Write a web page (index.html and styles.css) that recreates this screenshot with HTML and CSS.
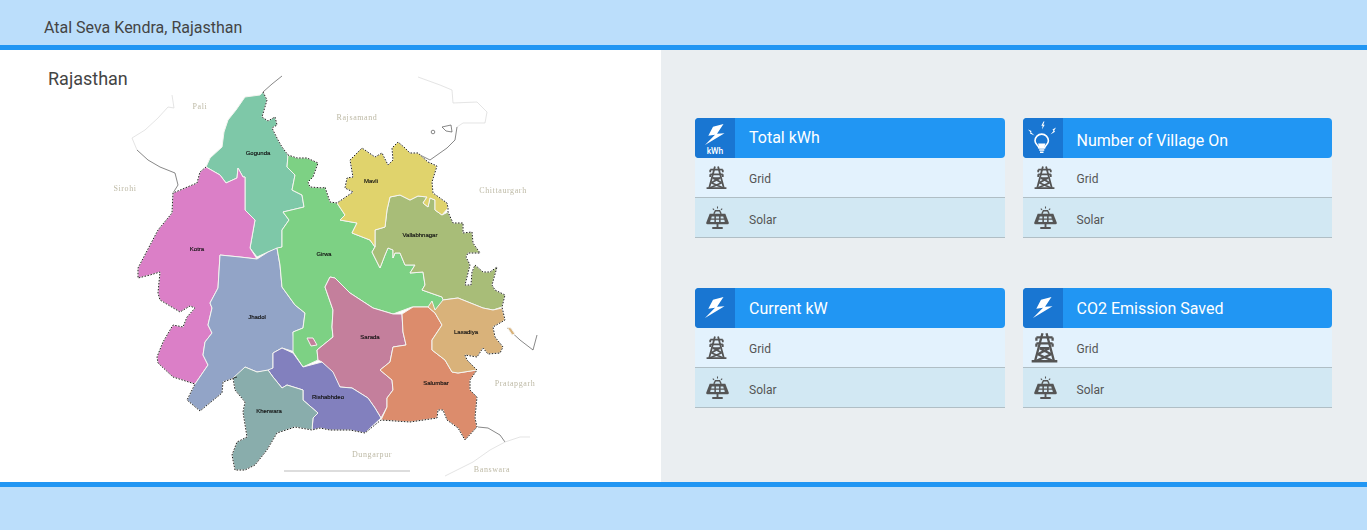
FILE: index.html
```html
<!doctype html>
<html>
<head>
    <meta charset="utf-8">
    <title>Atal Seva Kendra, Rajasthan</title>
    <link rel="stylesheet" href="styles.css">
</head>

<body>

<svg class="defs" width="0" height="0">
    <symbol id="i-bolt" viewBox="0 0 20 22">
        <path d="M18.500 0 L8 2.700 L3.300 11.800 L10 10.800 L0 21 L19.500 9.300 L12 9.800 Z" fill="#fff"/>
    </symbol>
    <symbol id="i-bulb" viewBox="0 0 40 40">
        <g fill="none" stroke="#fff">
            <path d="M16 30 C15.500 27 12 26.500 12 22.800 A6.700 6.700 0 0 1 25.400 22.800 C25.400 26.500 22 27 21.500 30 Z" stroke-width="1.600"/>
            <path d="M16.200 32 H21.300 M17 34.200 H20.500" stroke-width="1.500"/>
        </g>
        <path d="M15 25.500 H22.500 L21 30 H16.500 Z" fill="#fff"/>
        <path d="M20.500 3.500 L18.300 7.800 L19.700 7.800 L19 11.500 L21.700 6.800 L20.200 6.800 L21.500 3.500 Z" fill="#fff"/>
        <path d="M5 11.500 L8.500 13 L8 14.200 L11.500 17.500 L7 15.500 L7.500 14.300 Z" fill="#fff"/>
        <path d="M33 9.500 L29.500 11.500 L30.500 13 L27.500 16.500 L32 13.800 L31.200 12.500 Z" fill="#fff"/>
    </symbol>
    <symbol id="i-tower" viewBox="0 0 20 22">
        <g fill="none" stroke="#555" stroke-width="1.700">
            <path d="M8.500 .5 L3 21 M11.500 .5 L17 21 M.5 21.200 H19.500"/>
            <path d="M4 3.500 H16 M4 3.500 V6 M16 3.500 V6 M4 8 H16 M4 8 V10.500 M16 8 V10.500 M6.500 11.500 H13.500"/>
            <path d="M6.500 11.500 L15 16 M13.500 11.500 L5 16 M5 16 L16.500 21 M15 16 L3.500 21"/>
        </g>
    </symbol>
    <symbol id="i-solar" viewBox="0 0 22 22">
        <g fill="none" stroke="#555">
            <path d="M7.500 7.500 L9 4.500 H13 L14.500 7.500" stroke-width="1.300"/>
            <path d="M11 .5 V2.500 M6.500 2.500 L7.700 3.700 M15.500 2.500 L14.300 3.700" stroke-width="1"/>
            <path d="M11 17 V20 M6 21 H16" stroke-width="1.800"/>
        </g>
        <path d="M3.500 7.500 H18.500 L21.800 16 Q22 17.500 20.500 17.500 H1.500 Q0 17.500 .2 16 Z" fill="#555"/>
        <path d="M5.500 10 H8 V12 H5 Z M9.500 10 H12.500 V12 H9.500 Z M14 10 H16.500 L17 12 H14 Z M4.500 13.200 H8 V15.200 H4 Z M9.500 13.200 H12.500 V15.200 H9.500 Z M14 13.200 H17.500 L18 15.200 H14 Z" fill="#d2e8f3"/>
    </symbol>
</svg>

<div class="top-bar">Atal Seva Kendra, Rajasthan</div>

<div class="main">
    <div class="map-panel">
        <h2 class="map-title">Rajasthan</h2>
        <svg class="map" viewBox="0 50 661 432" width="661" height="432">
            <g class="outer-line">
                <polyline class="faint" points="172,95 174,108 168,107 158,118 145,130 132,138 137,150"/>
                <polyline points="137,150 148,160 160,167 175,173 178,185 173,193"/>
                <polyline points="282,76 272,84 263,92"/>
                <polyline class="faint" points="418,77 440,85 452,90 453,103 477,102 487,112 485,123 463,123 457,127"/>
                <polyline points="457,127 455,140 447,148 430,160 420,155"/>
                <circle cx="433" cy="132" r="1.800"/>
                <polygon points="442,127 451,125 452,132 446,131"/>
                <polyline points="478,427 488,428 500,435 505,442"/>
                <polyline class="faint" points="505,442 490,450 473,462 445,476"/>
                <polyline class="faint" points="505,442 520,437 530,437"/>
                <polyline points="507,328 520,340 533,350 537,335"/>
            </g>
            <g class="region">
                <polygon fill="#7ec8a8" points="263,92 267,100 262,117 268,121 275,117 277,125 272,128 278,140 282,147 288,155 287,167 295,175 292,190 302,195 304,207 283,212 289,220 282,230 282,247 268,252 257,257 250,248 255,220 245,210 245,177 243,177 238,168 237,178 226,183 220,175 206,167 210,158 222,147 224,132 228,120 236,110 245,97 260,95"/>
                <polygon fill="#db7fc7" points="206,167 220,175 226,183 237,178 238,168 243,177 245,177 245,210 255,220 250,248 257,259 240,257 220,255 218,288 210,303 212,308 208,325 212,333 205,342 203,355 208,365 195,384 173,377 158,363 157,357 163,342 173,325 183,327 187,317 195,308 190,306 180,312 160,300 158,293 160,272 150,275 138,278 138,268 158,230 172,213 173,193 197,183 200,172"/>
                <polygon fill="#92a4c7" points="220,255 240,257 257,259 268,252 277,248 280,265 282,287 295,305 305,313 303,328 293,332 295,352 282,348 273,353 273,370 257,372 245,367 237,377 223,382 222,393 200,411 187,400 195,384 208,365 203,355 205,342 212,333 208,325 212,308 210,303 218,288"/>
                <polygon fill="#7dd184" points="288,155 297,158 307,158 318,163 313,177 308,182 310,187 323,188 325,187 330,202 337,203 345,215 340,220 357,223 352,233 370,240 375,247 372,252 380,268 385,255 388,248 393,250 393,258 395,253 400,253 405,265 415,265 410,273 423,272 425,285 422,290 442,297 446,301 436,312 428,307 412,307 393,314 373,308 350,293 335,278 330,277 325,287 333,310 332,327 333,337 317,350 318,360 303,367 293,352 293,332 303,328 305,313 295,305 282,287 280,265 277,248 282,247 282,230 289,220 283,212 304,207 302,195 292,190 295,175 287,167"/>
                <polygon fill="#c47f9c" points="330,277 335,278 350,293 373,308 393,314 402,314 403,332 406,345 393,347 390,362 380,370 392,380 393,390 387,398 387,407 381,418 375,408 368,398 352,388 340,387 330,372 322,362 318,360 317,350 333,337 332,327 333,310 325,287"/>
                <polygon fill="#c47f9c" points="307,338 313,338 317,345 311,346"/>
                <polygon fill="#8280be" points="282,348 293,353 303,367 322,362 333,372 340,387 352,388 368,398 375,408 381,418 365,433 350,430 330,430 320,428 312,430 313,418 318,413 303,400 303,390 287,385 282,388 273,377 268,370 273,368 273,353"/>
                <polygon fill="#89adac" points="245,367 257,372 268,370 273,377 282,388 287,385 303,390 303,400 318,413 313,418 312,430 295,427 277,433 267,450 255,465 245,470 235,470 232,455 237,442 247,437 243,412 245,402 235,390 233,378"/>
                <polygon fill="#dc8c6c" points="402,314 413,307 428,307 435,313 442,325 432,340 432,350 445,360 452,372 458,373 477,370 470,380 470,390 477,397 475,418 477,427 465,440 458,428 447,420 443,410 438,410 437,418 410,422 381,420 387,407 387,398 393,390 392,380 380,370 390,362 393,347 406,345 403,332"/>
                <polygon fill="#a8bd78" points="390,197 400,195 410,200 418,196 427,197 423,203 428,207 430,198 435,200 435,210 442,215 448,212 453,223 463,223 463,233 472,232 473,243 480,253 468,253 466,257 470,265 465,285 471,285 472,272 475,265 483,272 490,272 497,267 492,285 495,290 505,295 502,307 493,310 483,308 458,298 443,300 442,297 422,290 425,285 423,272 410,273 415,265 405,265 400,253 395,253 393,258 393,250 388,248 385,255 380,268 372,252 375,247 375,230 385,227 387,210"/>
                <polygon fill="#d9b27a" points="428,307 432,301 435,310 443,300 458,298 483,308 493,310 502,308 505,320 493,327 495,337 503,347 500,353 488,354 483,348 477,357 465,355 467,360 477,370 458,373 452,372 445,360 432,350 432,340 442,325 435,313"/>
                <polygon fill="#d9b27a" points="507,327 511,328 515,334 512,335"/>
                <polygon fill="#e0d36c" points="398,142 405,148 410,153 418,153 428,162 437,166 432,182 433,193 447,203 448,208 442,215 435,210 435,200 430,198 428,207 423,203 427,197 418,196 410,200 400,195 390,197 387,210 385,227 375,230 375,247 370,240 352,233 357,223 340,220 345,215 337,203 353,192 345,188 347,178 353,177 350,160 362,148 375,157 382,153 388,165 393,160 392,148"/>
            </g>
            <g class="outer-dots">
                <polyline points="263,92 267,100 262,117 268,121 275,117 277,125 272,128 278,140 282,147 288,155"/>
                <polyline points="206,167 200,172 197,183 173,193 172,213 158,230 138,268 138,278 150,275 160,272 158,293 160,300 180,312 190,306 195,308 187,317 183,327 173,325 163,342 157,357 158,363 173,377 195,384 187,400 200,411 222,393 223,382 237,377 233,378 235,390 245,402 243,412 247,437 237,442 232,455 235,470 245,470 255,465 267,450 277,433 295,427 312,430 320,428 330,430 350,430 365,433 381,420 410,422 437,418 438,410 443,410 447,420 458,428 465,440 477,427 475,418 477,397 470,390 470,380 477,370 467,360 465,355 477,357 483,348 488,354 500,353 503,347 495,337 493,327 505,320 502,307 505,295 495,290 492,285 497,267 490,272 483,272 475,265 472,272 471,285 465,285 470,265 466,257 468,253 480,253 473,243 472,232 463,233 463,223 453,223 448,212 448,208 447,203 433,193 432,182 437,166 428,162 418,153 410,153 405,148 398,142 392,148 393,160 388,165 382,153 375,157 362,148 350,160 353,177 347,178 345,188 353,192 337,203 330,202 325,187 323,188 310,187 308,182 313,177 318,163 307,158 297,158 288,155"/>
            </g>
            <g class="district">
                <text x="258" y="155">Gogunda</text>
                <text x="197" y="251">Kotra</text>
                <text x="324" y="256" textLength="15" lengthAdjust="spacingAndGlyphs">Girwa</text>
                <text x="371" y="183">Mavli</text>
                <text x="420" y="237">Vallabhnagar</text>
                <text x="257" y="319">Jhadol</text>
                <text x="370" y="339">Sarada</text>
                <text x="466" y="334">Lasadiya</text>
                <text x="436" y="385">Salumbar</text>
                <text x="328" y="399">Rishabhdeo</text>
                <text x="269" y="413">Kherwara</text>
            </g>
            <g class="neighbour">
                <text x="200" y="109">Pali</text>
                <text x="357" y="120">Rajsamand</text>
                <text x="125" y="191">Sirohi</text>
                <text x="503" y="193">Chittaurgarh</text>
                <text x="515" y="386">Pratapgarh</text>
                <text x="372" y="457">Dungarpur</text>
                <text x="492" y="472">Banswara</text>
            </g>
            <rect class="scale" x="284" y="470" width="126" height="2"/>
        </svg>
    </div>

    <div class="cards">
        <div class="card">
            <div class="card-head">
                <div class="head-icon with-unit">
                    <svg class="bolt"><use href="#i-bolt"/></svg>
                    <span class="unit">kWh</span>
                </div>
                <div class="head-text">Total kWh</div>
            </div>
            <div class="row grid-row"><svg class="tower"><use href="#i-tower"/></svg><span>Grid</span></div>
            <div class="row solar-row"><svg class="solar"><use href="#i-solar"/></svg><span>Solar</span></div>
        </div>

        <div class="card">
            <div class="card-head">
                <div class="head-icon">
                    <svg class="bulb"><use href="#i-bulb"/></svg>
                </div>
                <div class="head-text low">Number of Village On</div>
            </div>
            <div class="row grid-row"><svg class="tower"><use href="#i-tower"/></svg><span>Grid</span></div>
            <div class="row solar-row"><svg class="solar"><use href="#i-solar"/></svg><span>Solar</span></div>
        </div>

        <div class="card">
            <div class="card-head">
                <div class="head-icon">
                    <svg class="bolt"><use href="#i-bolt"/></svg>
                </div>
                <div class="head-text mid">Current kW</div>
            </div>
            <div class="row grid-row"><svg class="tower"><use href="#i-tower"/></svg><span>Grid</span></div>
            <div class="row solar-row"><svg class="solar"><use href="#i-solar"/></svg><span>Solar</span></div>
        </div>

        <div class="card">
            <div class="card-head">
                <div class="head-icon">
                    <svg class="bolt"><use href="#i-bolt"/></svg>
                </div>
                <div class="head-text mid">CO2 Emission Saved</div>
            </div>
            <div class="row grid-row"><svg class="tower big"><use href="#i-tower"/></svg><span>Grid</span></div>
            <div class="row solar-row"><svg class="solar"><use href="#i-solar"/></svg><span>Solar</span></div>
        </div>
    </div>
</div>

<div class="bottom-bar"></div>

</body>
</html>
```

FILE: styles.css
```css
* {
    box-sizing: border-box;
}

body {
    margin: 0;
    height: 530px;
    overflow: hidden;
    background: #bbdefb;
    font-family: Roboto, "Liberation Sans", sans-serif;
    color: #444;
}

.defs {
    display: block;
    height: 0;
}

.top-bar {
    height: 50px;
    padding: 18px 0 0 44px;
    background: #bbdefb;
    border-bottom: 5px solid #2196f3;
    font-size: 16px;
    line-height: 19px;
}

.main {
    display: flex;
    height: 432px;
    background: #eaeef1;
}

.map-panel {
    display: grid;
    width: 661px;
    height: 432px;
    background: #fff;
}

.map-panel > * {
    grid-area: 1 / 1;
}

.map-title {
    margin: 0;
    padding: 18px 0 0 48px;
    font-size: 18px;
    line-height: 22px;
    font-weight: 400;
}

.map {
    display: block;
    filter: blur(.4px);
}

.outer-line polyline,
.outer-line circle,
.outer-line polygon {
    fill: none;
    stroke: #555;
    stroke-width: .7;
}

.outer-line .faint {
    stroke: #d8d8d8;
}

.region polygon {
    stroke: #f4f4f0;
    stroke-width: 1;
    stroke-linejoin: round;
}

.outer-dots polyline {
    fill: none;
    stroke: #222;
    stroke-width: 1;
    stroke-dasharray: 1.500 1.500;
}

.district text {
    font-family: "Liberation Sans", sans-serif;
    font-size: 6px;
    text-anchor: middle;
    fill: #111;
    stroke: #111;
    stroke-width: .15;
}

.neighbour text {
    font-family: "Liberation Serif", serif;
    font-size: 8px;
    letter-spacing: .6px;
    text-anchor: middle;
    fill: #bdb9a5;
}

.scale {
    fill: #ddd;
}

.cards {
    display: grid;
    grid-template-columns: 309.500px 309.500px;
    grid-template-rows: 120px 120px;
    column-gap: 18px;
    row-gap: 50px;
    padding: 68px 0 0 34px;
}

.card-head {
    display: flex;
    height: 40px;
    border-radius: 4px;
    overflow: hidden;
    background: #2196f3;
    color: #fff;
}

.head-icon {
    display: flex;
    flex-direction: column;
    align-items: center;
    justify-content: center;
    width: 40px;
    background: #1976d2;
}

.head-icon.with-unit {
    padding-top: 4px;
}

.bolt {
    width: 20px;
    height: 22px;
}

.bulb {
    width: 40px;
    height: 40px;
}

.unit {
    font-size: 8.500px;
    line-height: 10px;
    font-weight: 500;
}

.head-text {
    padding: 10px 0 0 14px;
    font-size: 16px;
    line-height: 20px;
}

.head-text.mid {
    padding-top: 11px;
}

.head-text.low {
    padding-top: 13px;
}

.row {
    display: grid;
    grid-template-columns: 54px auto;
    align-items: center;
    height: 40px;
    border-bottom: 1px solid #b0bec5;
    font-size: 12px;
    color: #555;
}

.row svg {
    margin-left: 11px;
}

.grid-row {
    background: #e3f2fd;
}

.grid-row span {
    margin-top: 2px;
}

.solar-row {
    background: #d2e8f3;
}

.solar-row span {
    margin-top: 4px;
}

.tower {
    width: 21px;
    height: 23px;
}

.row .tower.big {
    width: 27px;
    height: 31px;
    margin-left: 8px;
}

.solar {
    width: 23px;
    height: 23px;
}

.bottom-bar {
    height: 48px;
    background: #bbdefb;
    border-top: 5px solid #2196f3;
}
```
